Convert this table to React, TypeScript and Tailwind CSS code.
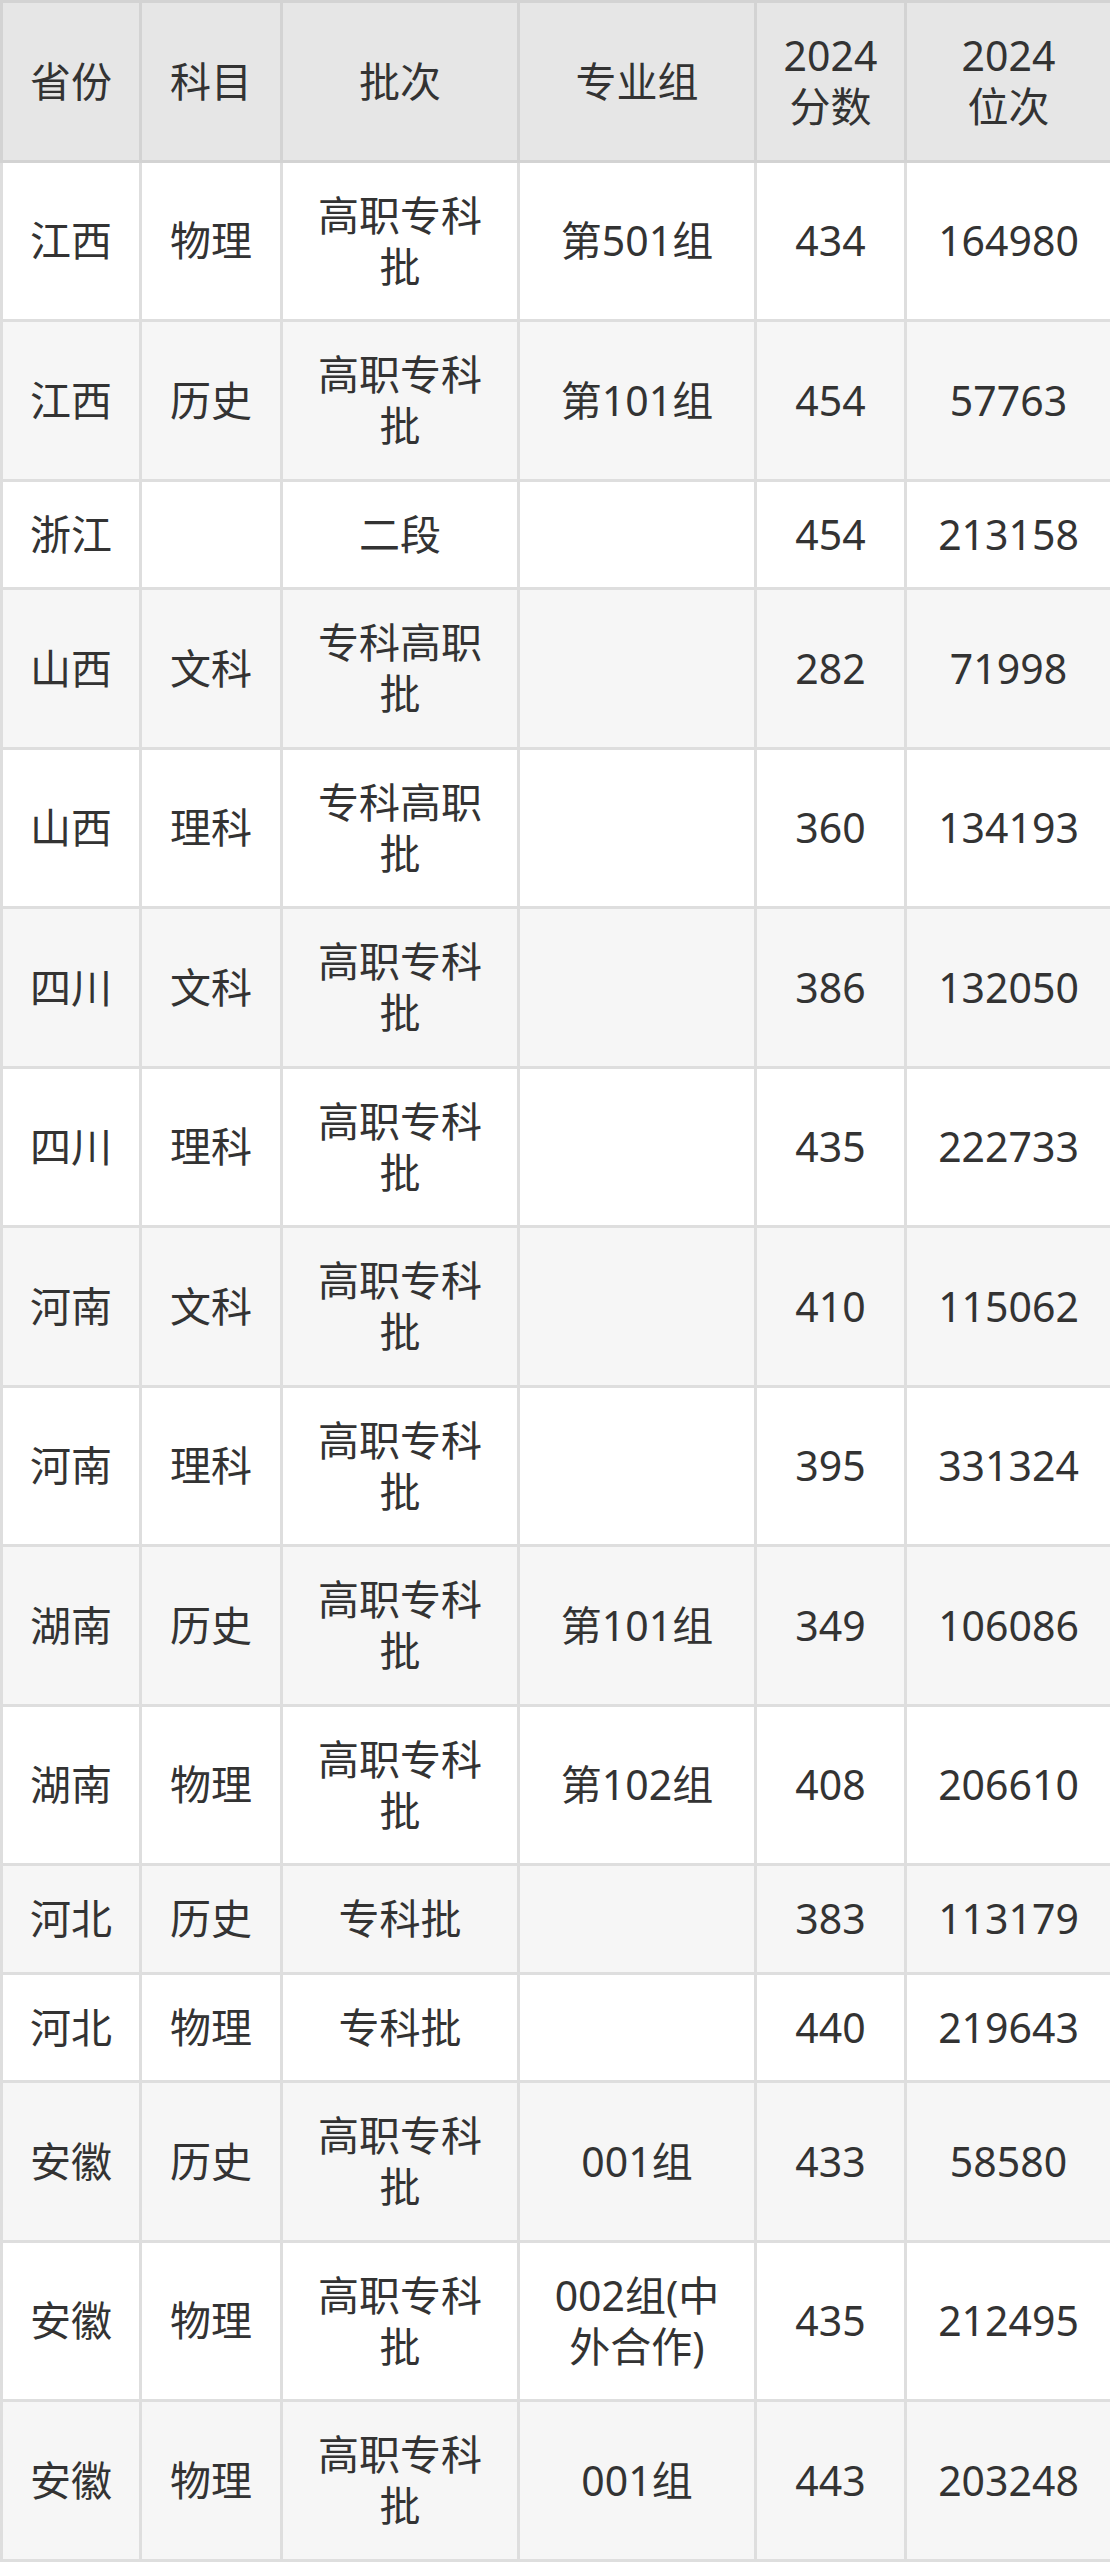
import React from "react";

type Row = { p: string; s: string; b: string[]; g: string[]; score: string; rank: string };

const rows: Row[] = [
  { p: "江西", s: "物理", b: ["高职专科", "批"], g: ["第501组"], score: "434", rank: "164980" },
  { p: "江西", s: "历史", b: ["高职专科", "批"], g: ["第101组"], score: "454", rank: "57763" },
  { p: "浙江", s: "", b: ["二段"], g: [], score: "454", rank: "213158" },
  { p: "山西", s: "文科", b: ["专科高职", "批"], g: [], score: "282", rank: "71998" },
  { p: "山西", s: "理科", b: ["专科高职", "批"], g: [], score: "360", rank: "134193" },
  { p: "四川", s: "文科", b: ["高职专科", "批"], g: [], score: "386", rank: "132050" },
  { p: "四川", s: "理科", b: ["高职专科", "批"], g: [], score: "435", rank: "222733" },
  { p: "河南", s: "文科", b: ["高职专科", "批"], g: [], score: "410", rank: "115062" },
  { p: "河南", s: "理科", b: ["高职专科", "批"], g: [], score: "395", rank: "331324" },
  { p: "湖南", s: "历史", b: ["高职专科", "批"], g: ["第101组"], score: "349", rank: "106086" },
  { p: "湖南", s: "物理", b: ["高职专科", "批"], g: ["第102组"], score: "408", rank: "206610" },
  { p: "河北", s: "历史", b: ["专科批"], g: [], score: "383", rank: "113179" },
  { p: "河北", s: "物理", b: ["专科批"], g: [], score: "440", rank: "219643" },
  { p: "安徽", s: "历史", b: ["高职专科", "批"], g: ["001组"], score: "433", rank: "58580" },
  { p: "安徽", s: "物理", b: ["高职专科", "批"], g: ["002组(中", "外合作)"], score: "435", rank: "212495" },
  { p: "安徽", s: "物理", b: ["高职专科", "批"], g: ["001组"], score: "443", rank: "203248" },
];

function Lines({ lines }: { lines: string[] }) {
  return (
    <>
      {lines.map((l, i) => (
        <React.Fragment key={i}>
          {i > 0 && <br />}
          {l}
        </React.Fragment>
      ))}
    </>
  );
}

const th =
  "border-[3px] border-[#d3d3d3] bg-[#e6e6e6] px-[10px] py-[27.25px] text-center font-normal align-middle";
const td = "border-[3px] border-[#dedede] px-[10px] py-[27.25px] text-center align-middle";

export default function App() {
  return (
    <div
      className="w-[1110px] bg-white text-[#333333] text-[41px] leading-[51px]"
      style={{ fontFamily: '"Noto Sans", "Noto Sans CJK SC", sans-serif' }}
    >
      <table className="w-[1110px] table-fixed border-collapse">
        <colgroup>
          <col className="w-[139px]" />
          <col className="w-[141px]" />
          <col className="w-[237px]" />
          <col className="w-[237px]" />
          <col className="w-[150px]" />
          <col className="w-[206px]" />
        </colgroup>
        <thead>
          <tr>
            <th className={th}>省份</th>
            <th className={th}>科目</th>
            <th className={th}>批次</th>
            <th className={th}>专业组</th>
            <th className={th}>
              2024
              <br />
              分数
            </th>
            <th className={th}>
              2024
              <br />
              位次
            </th>
          </tr>
        </thead>
        <tbody>
          {rows.map((r, i) => (
            <tr key={i} className={i % 2 === 0 ? "bg-white" : "bg-[#f6f6f6]"}>
              <td className={td}>{r.p}</td>
              <td className={td}>{r.s}</td>
              <td className={td}>
                <Lines lines={r.b} />
              </td>
              <td className={td}>
                <Lines lines={r.g} />
              </td>
              <td className={td}>{r.score}</td>
              <td className={td}>{r.rank}</td>
            </tr>
          ))}
        </tbody>
      </table>
    </div>
  );
}
